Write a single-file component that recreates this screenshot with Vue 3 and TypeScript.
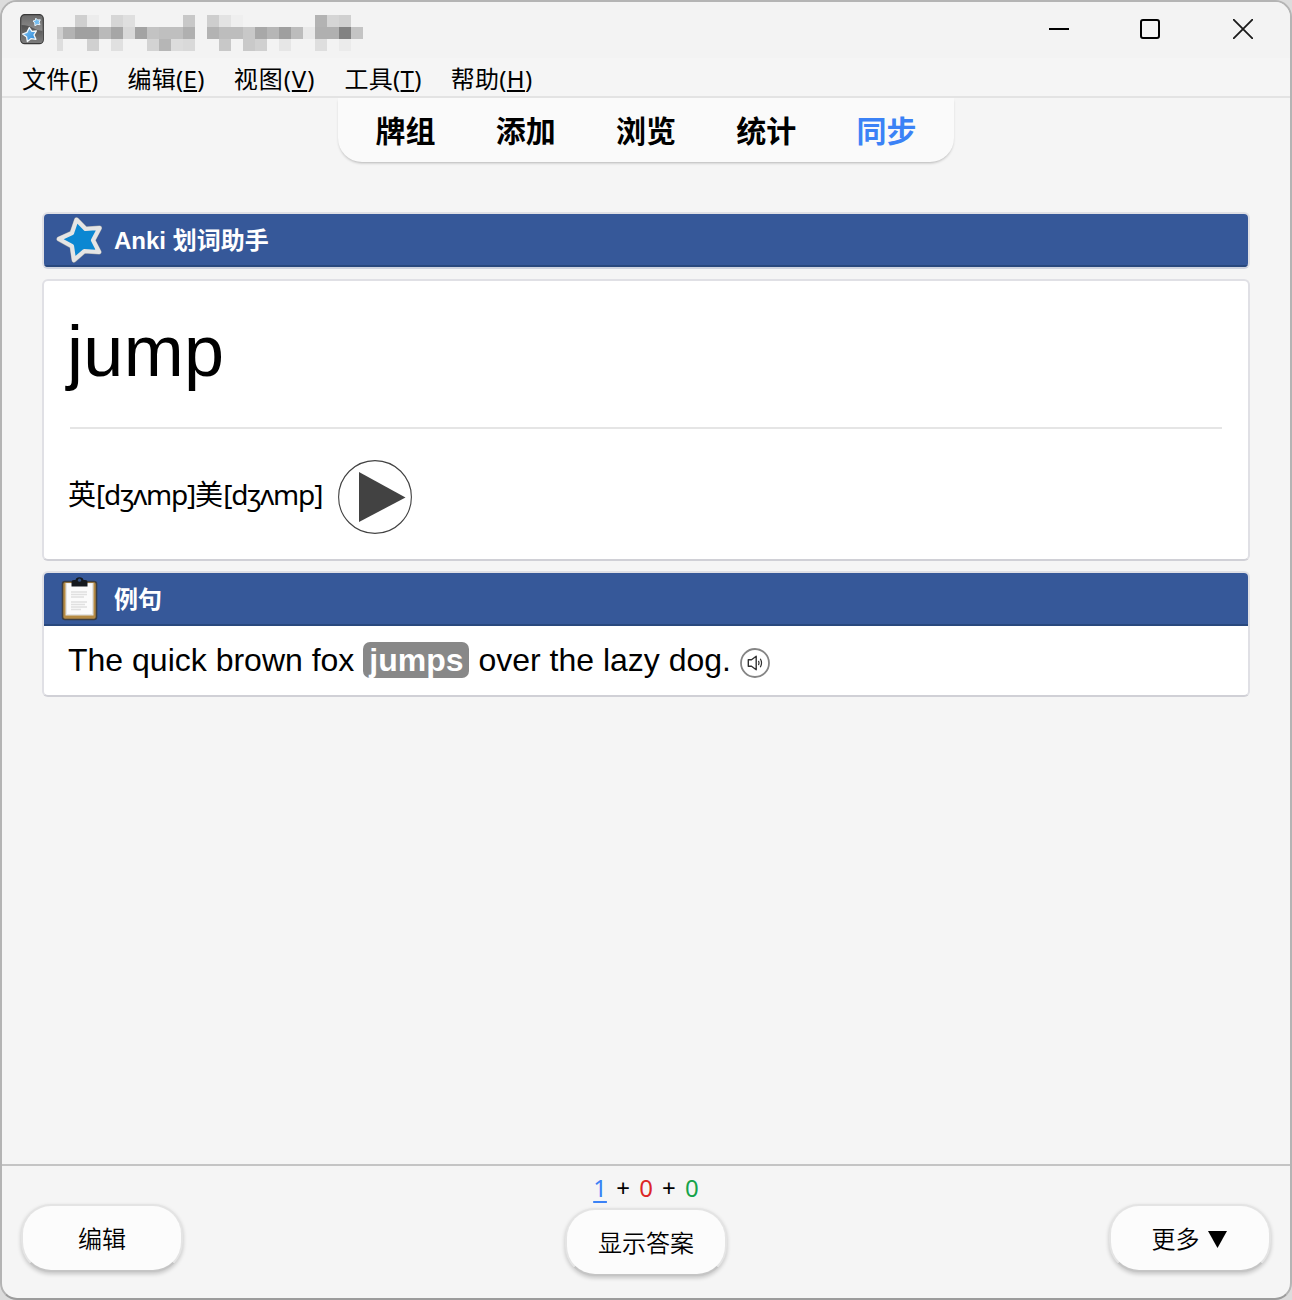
<script setup lang="ts">
type Cell = [x: number, y: number, width: number, shade: string]

const menus = [
  { label: '文件', key: 'F' },
  { label: '编辑', key: 'E' },
  { label: '视图', key: 'V' },
  { label: '工具', key: 'T' },
  { label: '帮助', key: 'H' },
]
const tabs = ['牌组', '添加', '浏览', '统计', '同步']

const star = 'M21.5 4.8L30.5 14 44.5 13 38 25.3 44 37 29.3 36 19 45 17 31.2 4 24 17 18.1Z'

// Redacted window title, drawn as 12px mosaic cells
const mosaic: Cell[] = [
  [18, 0, 12, '#cfcfcf'], [30, 0, 12, '#ececec'], [54, 0, 12, '#d6d6d6'], [66, 0, 12, '#dfdfdf'],
  [126, 0, 12, '#c8c8c8'], [150, 0, 12, '#cecece'], [162, 0, 12, '#e3e3e3'], [174, 0, 12, '#efefef'],
  [258, 0, 12, '#b3b3b3'], [270, 0, 12, '#d5d5d5'], [282, 0, 12, '#d0d0d0'],
  [0, 12, 6, '#cfcfcf'], [6, 12, 12, '#b3b3b3'], [18, 12, 24, '#a0a0a0'], [42, 12, 12, '#bababa'],
  [54, 12, 12, '#a6a6a6'], [66, 12, 12, '#d8d8d8'], [78, 12, 12, '#a3a3a3'], [90, 12, 12, '#c3c3c3'],
  [102, 12, 24, '#bfbfbf'], [126, 12, 12, '#b0b0b0'], [150, 12, 12, '#b3b3b3'], [162, 12, 24, '#bdbdbd'],
  [186, 12, 12, '#c8c8c8'], [198, 12, 12, '#a8a8a8'], [210, 12, 12, '#b6b6b6'], [222, 12, 12, '#9f9f9f'],
  [234, 12, 12, '#bcbcbc'], [246, 12, 12, '#e9e9e9'], [258, 12, 24, '#b0b0b0'], [282, 12, 12, '#828282'],
  [294, 12, 12, '#c4c4c4'],
  [0, 24, 6, '#dedede'], [30, 24, 12, '#d0d0d0'], [54, 24, 12, '#e0e0e0'], [90, 24, 12, '#d3d3d3'],
  [102, 24, 12, '#b6b6b6'], [114, 24, 12, '#dcdcdc'], [126, 24, 12, '#d9d9d9'], [162, 24, 12, '#c8c8c8'],
  [186, 24, 12, '#c9c9c9'], [198, 24, 12, '#d0d0d0'], [222, 24, 12, '#e6e6e6'], [258, 24, 12, '#dedede'],
  [282, 24, 12, '#ebebeb'],
]
</script>

<template>
  <div class="window">
    <header class="titlebar">
      <svg class="app-icon" width="24" height="31" viewBox="0 0 24 31">
        <defs>
          <linearGradient id="plate" x1="0" y1="0" x2="0" y2="1">
            <stop offset="0" stop-color="#6a6a6a" /><stop offset="0.5" stop-color="#8a8a8a" />
          </linearGradient>
          <linearGradient id="plate-low" x1="0" y1="0" x2="0" y2="1">
            <stop offset="0" stop-color="#505050" /><stop offset="1" stop-color="#7c7c7c" />
          </linearGradient>
          <linearGradient id="star-blue" x1="0" y1="0" x2="1" y2="1">
            <stop offset="0" stop-color="#8acaf5" /><stop offset="1" stop-color="#2383d8" />
          </linearGradient>
        </defs>
        <rect x="0.7" y="0.7" width="22.6" height="29" rx="4" fill="url(#plate)" stroke="#3a3a3a" stroke-width="1.2" />
        <path d="M1.4 11Q8 11 13 14T22.6 17V26Q22.6 29 19.5 29H4.5Q1.4 29 1.4 26Z" fill="url(#plate-low)" />
        <path d="M9.3 13.6L11.9 17.4 16.4 17 14 20.9 15.9 25.3 11.2 24.6 7.4 27.6 6.6 23 2.6 20 7 18.3Z" fill="url(#star-blue)" stroke="#f1f7fb" stroke-width="1.3" stroke-linejoin="round" />
        <path d="M15.8 4.2L17.6 6 20.3 5.8 19.2 8.2 20 10.7 17.2 10.4 14.9 11.8 14.8 9 13 7 15.4 6.4Z" fill="#72bcf0" stroke="#e7f2f9" stroke-width="1" stroke-linejoin="round" />
      </svg>
      <svg class="mosaic" width="306" height="36" shape-rendering="crispEdges">
        <rect v-for="([x, y, w, c], i) in mosaic" :key="i" :x="x" :y="y" :width="w" height="12" :fill="c" />
      </svg>
      <div class="controls">
        <svg width="20" height="20"><path d="M0 10H20" stroke="#000" stroke-width="2" /></svg>
        <svg width="20" height="20"><rect x="1" y="1" width="18" height="18" rx="2" fill="none" stroke="#000" stroke-width="2" /></svg>
        <svg width="20" height="20"><path d="M.5.5L19.5 19.5M19.5.5L.5 19.5" stroke="#1a1a1a" stroke-width="1.8" stroke-linecap="round" /></svg>
      </div>
    </header>
    <nav class="menubar">
      <span v-for="m in menus" :key="m.key" class="menu" :class="{ view: m.key === 'V' }">{{ m.label }}(<span class="mnemonic">{{ m.key }}</span>)</span>
    </nav>
    <nav class="toolbar">
      <span v-for="(t, i) in tabs" :key="t" :class="{ sync: i === 4 }">{{ t }}</span>
    </nav>

    <main class="card">
      <section class="panel title-panel">
        <div class="bar">
          <svg class="bar-icon" width="50" height="50" viewBox="0 0 50 50">
            <g stroke-linejoin="round" fill="#0b87d2">
              <path :d="star" stroke="#9d9fa3" stroke-width="5" />
              <path :d="star" stroke="#e5e5e5" stroke-width="4.2" />
            </g>
          </svg>
          <span>Anki 划词助手</span>
        </div>
      </section>
      <section class="panel word-panel">
        <div class="word">jump</div>
        <hr>
        <div class="phonetic">
          <span class="ipa">英<i>[dʒʌmp]</i>美<i>[dʒʌmp]</i></span>
          <svg width="74" height="74" viewBox="0 0 74 74">
            <circle cx="37" cy="37" r="36.4" fill="#fff" stroke="#424242" stroke-width="1.1" />
            <path d="M21 12V62L67.5 37.5Z" fill="#424242" />
          </svg>
        </div>
      </section>
      <section class="panel">
        <div class="bar">
          <svg class="bar-icon" width="50" height="50" viewBox="0 0 50 50">
            <rect x="7.5" y="7.5" width="34" height="38" rx="2.5" fill="#b58a43" stroke="#3b3d43" stroke-width="1.6" />
            <path d="M10.5 9H38.5V41.5H10.5Z" fill="#e4e4e4" />
            <path d="M12 9.5H37V40H12Z" fill="#fbfbfb" />
            <path d="M16 18H32M16 20.5H32M16 23H29M16 28H32M16 30.5H30M16 33H32M16 35.5H26" stroke="#e0e0e0" stroke-width="1.4" />
            <path d="M16.5 12.5V8Q16.5 6 19 6H20.5Q21 3.2 24.5 3.2T28.5 6H30Q32.5 6 32.5 8V12.5Z" fill="#15191e" />
            <circle cx="24.5" cy="6.2" r="1.6" fill="#36527f" />
          </svg>
          <span>例句</span>
        </div>
        <div class="sentence">
          <span>The quick brown fox </span><b>jumps</b><span> over the lazy dog.</span>
          <svg class="speaker" width="30" height="30" viewBox="0 0 30 30" fill="none">
            <circle cx="15" cy="15" r="14" stroke="#858585" stroke-width="1.8" />
            <path d="M8.3 11.8H11.5L16.2 8.2V21.8L11.5 18.3H8.3Z" stroke="#303030" stroke-width="1.4" stroke-linejoin="round" />
            <path d="M18.5 12.9Q19.6 15 18.5 17.1M20.3 10.8Q22.8 15 20.3 19.2" stroke="#303030" stroke-width="1.2" />
          </svg>
        </div>
      </section>
    </main>

    <footer class="bottom">
      <button>编辑</button>
      <div class="answer">
        <div class="counts"><u class="new">1</u> + <span class="learn">0</span> + <span class="due">0</span></div>
        <button>显示答案</button>
      </div>
      <button class="more">更多<svg width="19" height="17"><path d="M0 0H19L9.5 17Z" /></svg></button>
    </footer>
  </div>
</template>

<style>
body { background: #dcdcdc; }
</style>

<style scoped>
.window {
  box-sizing: border-box;
  width: 1292px;
  height: 1300px;
  display: flex;
  flex-direction: column;
  overflow: hidden;
  border: 2px solid #b4b4b4;
  border-bottom-color: #9c9c9c;
  border-radius: 17px;
  background: #f5f5f5;
  color: #000;
  font-family: "Noto Sans", "Noto Sans CJK SC", sans-serif;
}
.titlebar {
  flex: none;
  height: 56px;
  display: flex;
  align-items: flex-start;
  background: #f3f3f3;
}
.app-icon { margin: 12px 0 0 17.5px; }
.mosaic { margin: 13px 0 0 13.5px; }
.controls {
  display: flex;
  gap: 71px;
  margin: 17px 37px 0 auto;
}
.controls svg:last-child { margin-left: 2px; }
.menubar {
  flex: none;
  box-sizing: border-box;
  height: 40px;
  display: flex;
  gap: 29px;
  padding-left: 20px;
  border-bottom: 2px solid #e3e3e3;
  font-size: 24px;
  line-height: 41px;
  white-space: nowrap;
}
.menu { letter-spacing: 0.3px; }
.menu.view { letter-spacing: 1px; }
.mnemonic {
  text-decoration: underline;
  text-decoration-thickness: 2px;
  text-underline-offset: 2px;
}
.toolbar {
  flex: none;
  box-sizing: border-box;
  align-self: center;
  display: flex;
  justify-content: center;
  gap: 60.3px;
  width: 616px;
  height: 64px;
  border-radius: 0 0 24px 24px;
  background: #fafafa;
  box-shadow: 0 2px 3px -1px rgba(0, 0, 0, .27);
  font: 700 30px/63px "Noto Sans CJK SC", sans-serif;
}
.sync { color: #3b82f6; }
.card {
  flex: 1;
  display: flex;
  flex-direction: column;
  gap: 10px;
  padding: 50px 40px 0;
}
.panel {
  border: 2px solid #e0e0e5;
  border-bottom-color: #d0d0d6;
  border-radius: 6px;
  background: #fff;
  overflow: hidden;
}
.title-panel { border-bottom-color: #d0d4df; }
.bar {
  box-sizing: border-box;
  height: 53px;
  display: flex;
  align-items: center;
  gap: 9px;
  padding-left: 11px;
  border-bottom: 2px solid #29487d;
  background: #365899;
  color: #fff;
  font: 700 24px/50px "Liberation Sans", "Noto Sans CJK SC", sans-serif;
}
.bar span { padding-top: 2px; }
.bar-icon { flex: none; }
.word-panel { height: 278px; }
.word {
  height: 146px;
  padding-left: 23px;
  font: 72px/140px "Liberation Sans", sans-serif;
  letter-spacing: 0.3px;
}
hr {
  height: 2px;
  margin: 0 26px;
  border: 0;
  background: #e5e5e5;
}
.phonetic {
  display: flex;
  align-items: center;
  gap: 16px;
  height: 74px;
  margin: 31px 0 0 24px;
  font-size: 28px;
}
.ipa {
  padding-bottom: 9px;
  white-space: nowrap;
}
.ipa i { font-style: normal; letter-spacing: -1.16px; }
.sentence {
  display: flex;
  align-items: center;
  height: 67px;
  padding: 0 0 2px 24px;
  font: 32px/36px "Liberation Sans", sans-serif;
  white-space: pre;
}
.sentence b {
  height: 36px;
  padding: 0 6px;
  border-radius: 7px;
  background: #888;
  color: #fff;
}
.speaker { margin: 6px 0 0 9px; }
.bottom {
  flex: none;
  box-sizing: border-box;
  height: 134px;
  display: flex;
  justify-content: space-between;
  align-items: flex-start;
  padding: 0 19px;
  border-top: 2px solid #c4c4c4;
}
button {
  box-sizing: border-box;
  width: 162px;
  height: 68px;
  margin: 38px 0 0;
  padding: 0 0 1px;
  border: 2px solid #e4e4e4;
  border-bottom-color: #c5c5c5;
  border-radius: 30px;
  background: #fcfcfc;
  box-shadow: 0 2px 4px rgba(0, 0, 0, .2);
  color: #000;
  font: 350 24px/34px "Noto Sans CJK SC", sans-serif;
}
.more { padding-right: 2px; }
.more svg { margin-left: 8px; }
.answer { display: flex; flex-direction: column; align-items: center; }
.answer button { margin: 0; }
.counts {
  height: 42px;
  font-size: 24px;
  line-height: 43px;
  white-space: pre;
  word-spacing: 3px;
}
.new { color: #3b82f6; text-decoration-thickness: 2px; text-underline-offset: 4px; }
.learn { color: #dc2626; }
.due { color: #16a34a; }
</style>
